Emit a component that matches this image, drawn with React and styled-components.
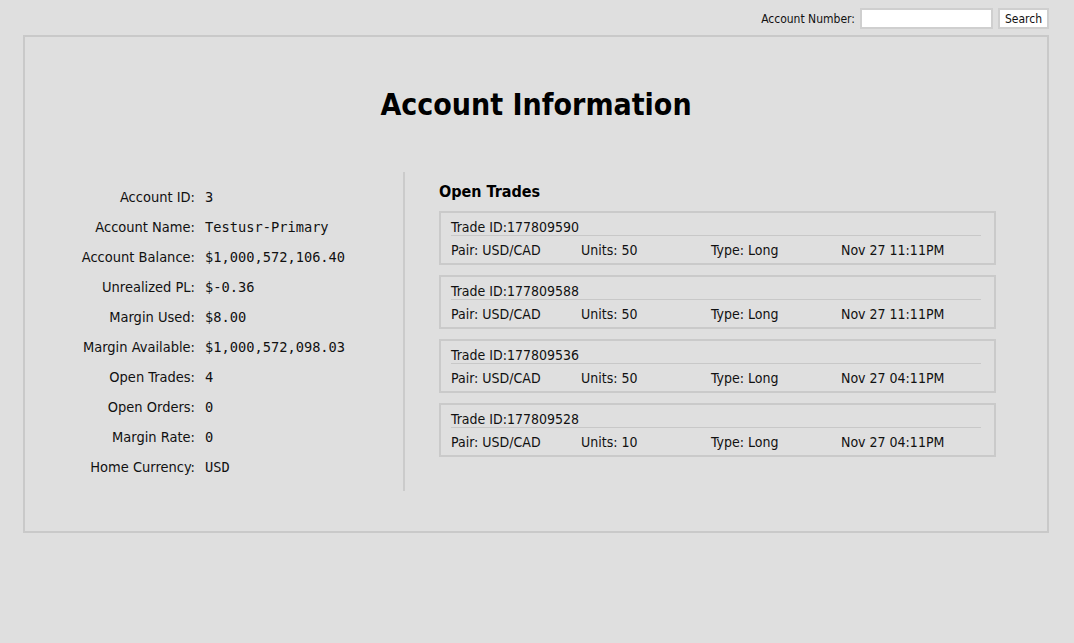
import React from 'react';
import styled, { createGlobalStyle } from 'styled-components';

const GlobalStyle = createGlobalStyle`
  html, body {
    margin: 0;
    padding: 0;
    background: #dfdfdf;
  }
  body {
    font-family: "DejaVu Sans Condensed", "DejaVu Sans", sans-serif;
    color: #111;
  }
`;

const account = [
  ['Account ID:', '3'],
  ['Account Name:', 'Testusr-Primary'],
  ['Account Balance:', '$1,000,572,106.40'],
  ['Unrealized PL:', '$-0.36'],
  ['Margin Used:', '$8.00'],
  ['Margin Available:', '$1,000,572,098.03'],
  ['Open Trades:', '4'],
  ['Open Orders:', '0'],
  ['Margin Rate:', '0'],
  ['Home Currency:', 'USD'],
];

const trades = [
  { id: '177809590', pair: 'USD/CAD', units: 50, type: 'Long', time: 'Nov 27 11:11PM' },
  { id: '177809588', pair: 'USD/CAD', units: 50, type: 'Long', time: 'Nov 27 11:11PM' },
  { id: '177809536', pair: 'USD/CAD', units: 50, type: 'Long', time: 'Nov 27 04:11PM' },
  { id: '177809528', pair: 'USD/CAD', units: 10, type: 'Long', time: 'Nov 27 04:11PM' },
];

const Page = styled.div`
  padding: 8px 25px 0 23px;
`;

const SearchBar = styled.form`
  display: flex;
  justify-content: flex-end;
  align-items: center;
  gap: 5px;
  height: 21px;
  margin-bottom: 6px;
`;

const SearchLabel = styled.label`
  font-size: 12px;
`;

const SearchInput = styled.input`
  width: 127px;
  height: 15px;
  padding: 1px;
  border: 2px solid #cfcfcf;
  background: #fff;
  outline: none;
`;

const SearchButton = styled.button`
  height: 21px;
  padding: 0 5px;
  border: 2px solid #cfcfcf;
  background: #fff;
  font-family: inherit;
  font-size: 12px;
  color: #111;
`;

const Panel = styled.section`
  border: 2px solid #c9c9c9;
  height: 498px;
  box-sizing: border-box;
`;

const Title = styled.h1`
  margin: 50px 0 49px;
  text-align: center;
  font-family: "DejaVu Sans Condensed", "DejaVu Sans", sans-serif;
  font-weight: 700;
  font-size: 30px;
  line-height: 36px;
  color: #000;
`;

const Columns = styled.div`
  display: flex;
`;

const InfoGrid = styled.dl`
  display: grid;
  grid-template-columns: 170px auto;
  grid-auto-rows: 30px;
  column-gap: 10px;
  align-items: center;
  width: 378px;
  margin: 0;
  padding: 10px 0 9px;
  border-right: 2px solid #cbcbcb;
`;

const Label = styled.dt`
  text-align: right;
  font-size: 14.5px;
`;

const Value = styled.dd`
  margin: 0;
  font-family: "DejaVu Sans Mono", monospace;
  font-size: 13.7px;
`;

const TradesCol = styled.div`
  padding-left: 34px;
  width: 557px;
`;

const TradesTitle = styled.h2`
  margin: 10px 0 9px;
  font-family: "DejaVu Sans Condensed", "DejaVu Sans", sans-serif;
  font-weight: 700;
  font-size: 16px;
  line-height: 20px;
  color: #000;
`;

const TradeList = styled.ul`
  list-style: none;
  margin: 0;
  padding: 0;
  display: flex;
  flex-direction: column;
  gap: 10px;
`;

const TradeCard = styled.li`
  border: 2px solid #cacaca;
  height: 54px;
  box-sizing: border-box;
  padding: 5px 13px 0 10px;
  font-size: 14px;
`;

const TradeHead = styled.div`
  height: 17px;
  line-height: 18px;
  border-bottom: 1px solid #c8c8c8;
`;

const TradeRow = styled.div`
  display: grid;
  grid-template-columns: repeat(4, 130px);
  line-height: 18px;
  margin-top: 5px;
`;

function App() {
  return (
    <>
      <GlobalStyle />
      <Page>
        <SearchBar onSubmit={e => e.preventDefault()}>
          <SearchLabel htmlFor="acct">Account Number:</SearchLabel>
          <SearchInput id="acct" type="text" />
          <SearchButton type="submit">Search</SearchButton>
        </SearchBar>
        <Panel>
          <Title>Account Information</Title>
          <Columns>
            <InfoGrid>
              {account.map(([label, value]) => (
                <React.Fragment key={label}>
                  <Label>{label}</Label>
                  <Value>{value}</Value>
                </React.Fragment>
              ))}
            </InfoGrid>
            <TradesCol>
              <TradesTitle>Open Trades</TradesTitle>
              <TradeList>
                {trades.map(t => (
                  <TradeCard key={t.id}>
                    <TradeHead>Trade ID:{t.id}</TradeHead>
                    <TradeRow>
                      <span>Pair: {t.pair}</span>
                      <span>Units: {t.units}</span>
                      <span>Type: {t.type}</span>
                      <span>{t.time}</span>
                    </TradeRow>
                  </TradeCard>
                ))}
              </TradeList>
            </TradesCol>
          </Columns>
        </Panel>
      </Page>
    </>
  );
}

export default App;
